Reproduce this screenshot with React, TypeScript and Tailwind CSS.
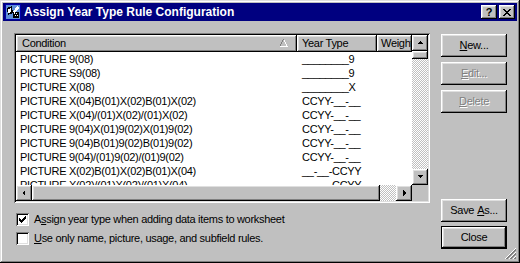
import React from "react";

const raised =
  "shadow-[inset_-1px_-1px_0_#000000,inset_1px_1px_0_#ffffff,inset_-2px_-2px_0_#808080,inset_2px_2px_0_#dfdfdf]";
const checker =
  "[background-image:repeating-conic-gradient(#ffffff_0%_25%,#c0c0c0_0%_50%)] [background-size:2px_2px]";

const rows: [string, string][] = [
  ["PICTURE 9(08)", "________9"],
  ["PICTURE S9(08)", "________9"],
  ["PICTURE X(08)", "________X"],
  ["PICTURE X(04)B(01)X(02)B(01)X(02)", "CCYY-__-__"],
  ["PICTURE X(04)/(01)X(02)/(01)X(02)", "CCYY-__-__"],
  ["PICTURE 9(04)X(01)9(02)X(01)9(02)", "CCYY-__-__"],
  ["PICTURE 9(04)B(01)9(02)B(01)9(02)", "CCYY-__-__"],
  ["PICTURE 9(04)/(01)9(02)/(01)9(02)", "CCYY-__-__"],
  ["PICTURE X(02)B(01)X(02)B(01)X(04)", "__-__-CCYY"],
  ["PICTURE X(02)/(01)X(02)/(01)X(04)", "__-__-CCYY"],
];

function Arrow({ dir }: { dir: "up" | "down" | "left" | "right" }) {
  const pts: Record<string, string> = {
    up: "4,2 1,5 7,5",
    down: "1,2 7,2 4,5",
    left: "5,1 5,7 2,4",
    right: "3,1 3,7 6,4",
  };
  return (
    <svg width="8" height="8" viewBox="0 0 8 8" shapeRendering="crispEdges">
      <polygon points={pts[dir]} fill="#000" />
    </svg>
  );
}

function SBtn({ dir }: { dir: "up" | "down" | "left" | "right" }) {
  return (
    <div className={`w-[16px] h-[16px] bg-[#c0c0c0] flex items-center justify-center shrink-0 ${raised}`}>
      <Arrow dir={dir} />
    </div>
  );
}

function Btn({
  children,
  disabled,
  isDefault,
}: {
  children: React.ReactNode;
  disabled?: boolean;
  isDefault?: boolean;
}) {
  const inner = (
    <div
      className={`h-full w-full flex items-center justify-center bg-[#c0c0c0] ${raised} ${
        disabled ? "text-[#808080] [text-shadow:1px_1px_0_#ffffff]" : "text-black"
      }`}
    >
      {children}
    </div>
  );
  if (isDefault)
    return <div className="w-[66px] h-[23px] border border-black">{inner}</div>;
  return <div className="w-[66px] h-[23px]">{inner}</div>;
}

export default function App() {
  return (
    <div
      className="w-[520px] h-[263px] bg-[#c0c0c0] p-[3px] flex flex-col relative shadow-[inset_-1px_-1px_0_#000000,inset_1px_1px_0_#dfdfdf,inset_-2px_-2px_0_#808080,inset_2px_2px_0_#ffffff] text-[11px] leading-none tracking-[-0.3px]"
      style={{ fontFamily: '"Liberation Sans", Arial, sans-serif' }}
    >
      {/* title bar */}
      <div className="h-[18px] bg-[#000080] flex items-center pl-[2px] pr-[2px] shrink-0">
        <svg width="16" height="16" viewBox="0 0 16 16" shapeRendering="crispEdges">
          <rect x="0" y="0" width="16" height="16" fill="#0000a8" />
          <rect x="1" y="1" width="14" height="14" fill="#5f8fd8" />
          <path d="M2 4 L7 2 L8 9 L3 11 Z" fill="#000" />
          <path d="M3 5 L6 4 L6.5 8 L3.5 9 Z" fill="#fff" />
          <rect x="8" y="8" width="6" height="6" fill="#000" />
          <rect x="9" y="9" width="1" height="1" fill="#fff" />
          <rect x="11" y="9" width="1" height="1" fill="#fff" />
          <rect x="10" y="11" width="1" height="1" fill="#fff" />
          <rect x="12" y="11" width="1" height="1" fill="#fff" />
          <path d="M12 2 L14 4 L9 9 L8 8 Z" fill="#fff" />
        </svg>
        <span className="ml-[3px] text-white font-bold text-[12px] tracking-normal">
          Assign Year Type Rule Configuration
        </span>
        <div className="ml-auto flex gap-[2px] tracking-normal">
          <div className={`w-[16px] h-[14px] bg-[#c0c0c0] flex items-center justify-center font-bold text-[11px] ${raised}`}>
            ?
          </div>
          <div className={`w-[16px] h-[14px] bg-[#c0c0c0] flex items-center justify-center ${raised}`}>
            <svg width="8" height="7" viewBox="0 0 8 7" shapeRendering="crispEdges">
              <path d="M0 0h2v1h-2zM6 0h2v1h-2zM1 1h2v1h-2zM5 1h2v1h-2zM2 2h4v1h-4zM3 3h2v1h-2zM2 4h4v1h-4zM1 5h2v1h-2zM5 5h2v1h-2zM0 6h2v1h-2zM6 6h2v1h-2z" fill="#000" />
            </svg>
          </div>
        </div>
      </div>

      {/* body */}
      <div className="flex pl-[11px] pt-[12px]">
        <div className="w-[416px] flex flex-col">
          {/* listview */}
          <div className="h-[170px] p-[2px] bg-white shadow-[inset_1px_1px_0_#808080,inset_-1px_-1px_0_#ffffff,inset_2px_2px_0_#000000,inset_-2px_-2px_0_#dfdfdf] flex flex-col">
            <div className="flex flex-1 min-h-0">
              <div className="w-[396px] flex flex-col overflow-hidden">
                <div className="h-[17px] flex shrink-0">
                  <div className={`w-[281px] bg-[#c0c0c0] flex items-center pl-[6px] relative ${raised}`}>
                    Condition
                    <svg className="absolute left-[263px] top-[4px]" width="9" height="8" viewBox="0 0 9 8" shapeRendering="crispEdges">
                      <path d="M4 0h1v1h-1zM3 1h1v2h-1zM2 3h1v2h-1zM1 5h1v2h-1z" fill="#808080" />
                      <path d="M5 1h1v2h-1zM6 3h1v2h-1zM7 5h1v2h-1zM1 7h8v1h-8z" fill="#ffffff" />
                    </svg>
                  </div>
                  <div className={`w-[80px] bg-[#c0c0c0] flex items-center pl-[5px] ${raised}`}>
                    Year Type
                  </div>
                  <div className={`w-[35px] bg-[#c0c0c0] flex items-center pl-[4px] overflow-hidden whitespace-nowrap ${raised}`}>
                    Weight
                  </div>
                </div>
                <div className="flex-1 overflow-hidden">
                  {rows.map(([c, y], i) => (
                    <div key={i} className="h-[14px] flex items-center whitespace-nowrap">
                      <div className="w-[281px] pl-[4px]">{c}</div>
                      <div className="w-[80px] pl-[5px]">{y}</div>
                    </div>
                  ))}
                </div>
              </div>
              <div className="w-[16px] flex flex-col">
                <SBtn dir="up" />
                <div className={`w-[16px] h-[8px] bg-[#c0c0c0] ${raised}`} />
                <div className={`flex-1 ${checker}`} />
                <SBtn dir="down" />
              </div>
            </div>
            <div className="h-[16px] flex shrink-0">
              <SBtn dir="left" />
              <div className={`w-[348px] h-[16px] bg-[#c0c0c0] ${raised}`} />
              <div className={`flex-1 ${checker}`} />
              <SBtn dir="right" />
              <div className="w-[16px] h-[16px] bg-[#c0c0c0]" />
            </div>
          </div>

          {/* checkboxes */}
          <div className="mt-[10px] flex items-center h-[13px] pl-[2px]">
            <div className="w-[13px] h-[13px] bg-white shadow-[inset_1px_1px_0_#808080,inset_-1px_-1px_0_#ffffff,inset_2px_2px_0_#000000,inset_-2px_-2px_0_#dfdfdf] flex items-center justify-center">
              <svg width="7" height="7" viewBox="0 0 7 7" shapeRendering="crispEdges">
                <path d="M6 0h1v3h-1zM5 1h1v3h-1zM4 2h1v3h-1zM3 3h1v3h-1zM2 4h1v3h-1zM1 3h1v3h-1zM0 2h1v3h-1z" fill="#000" />
              </svg>
            </div>
            <span className="ml-[5px]">
              A<span className="underline">s</span>sign year type when adding data items to worksheet
            </span>
          </div>
          <div className="mt-[6px] flex items-center h-[13px] pl-[2px]">
            <div className="w-[13px] h-[13px] bg-white shadow-[inset_1px_1px_0_#808080,inset_-1px_-1px_0_#ffffff,inset_2px_2px_0_#000000,inset_-2px_-2px_0_#dfdfdf]" />
            <span className="ml-[5px]">
              <span className="underline">U</span>se only name, picture, usage, and subfield rules.
            </span>
          </div>
        </div>

        {/* buttons */}
        <div className="ml-[11px] flex flex-col">
          <div className="mt-[1px]">
            <Btn>
              <span className="underline">N</span>ew...
            </Btn>
          </div>
          <div className="mt-[5px]">
            <Btn disabled>
              <span className="underline">E</span>dit...
            </Btn>
          </div>
          <div className="mt-[5px]">
            <Btn disabled>
              <span className="underline">D</span>elete
            </Btn>
          </div>
          <div className="mt-[86px]">
            <Btn>
              Save <span className="underline ml-[3px]">A</span>s...
            </Btn>
          </div>
          <div className="mt-[4px]">
            <Btn isDefault>Close</Btn>
          </div>
        </div>
      </div>

      {/* resize grip */}
      <svg className="absolute right-[3px] bottom-[3px]" width="12" height="12" viewBox="0 0 12 12" shapeRendering="crispEdges">
        <path d="M11 0 L0 11" stroke="#ffffff" />
        <path d="M11 1 L1 11 M11 2 L2 11" stroke="#808080" />
        <path d="M11 4 L4 11" stroke="#ffffff" />
        <path d="M11 5 L5 11 M11 6 L6 11" stroke="#808080" />
        <path d="M11 8 L8 11" stroke="#ffffff" />
        <path d="M11 9 L9 11 M11 10 L10 11" stroke="#808080" />
      </svg>
    </div>
  );
}
